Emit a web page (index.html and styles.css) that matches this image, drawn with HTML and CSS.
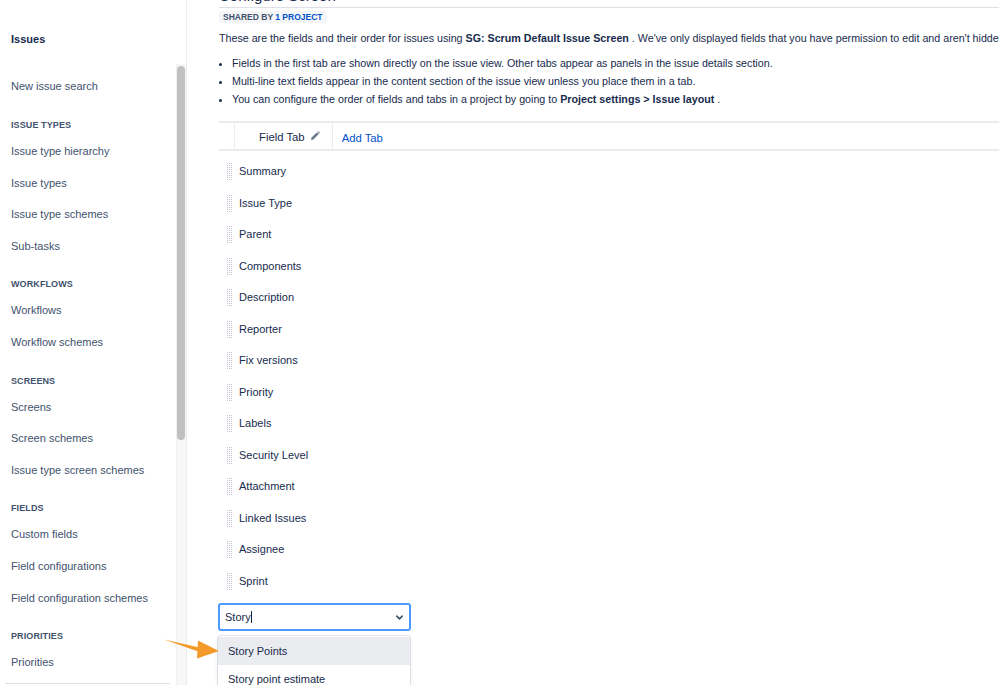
FILE: index.html
```html
<!DOCTYPE html>
<html lang="en">
<head>
  <meta charset="UTF-8">
  <title>Configure Screen</title>
  <link rel="stylesheet" href="styles.css">
</head>
<body>

<!-- left admin nav -->
<aside class="sidebar">
  <nav class="nav">
    <div class="nav-title">Issues</div>
    <a class="nav-item first">New issue search</a>

    <div class="nav-head">ISSUE TYPES</div>
    <a class="nav-item">Issue type hierarchy</a>
    <a class="nav-item">Issue types</a>
    <a class="nav-item">Issue type schemes</a>
    <a class="nav-item">Sub-tasks</a>

    <div class="nav-head">WORKFLOWS</div>
    <a class="nav-item">Workflows</a>
    <a class="nav-item">Workflow schemes</a>

    <div class="nav-head">SCREENS</div>
    <a class="nav-item">Screens</a>
    <a class="nav-item">Screen schemes</a>
    <a class="nav-item">Issue type screen schemes</a>

    <div class="nav-head">FIELDS</div>
    <a class="nav-item">Custom fields</a>
    <a class="nav-item">Field configurations</a>
    <a class="nav-item">Field configuration schemes</a>

    <div class="nav-head">PRIORITIES</div>
    <a class="nav-item">Priorities</a>
    <div class="nav-rule"></div>
  </nav>
  <div class="scroll-track"><div class="scroll-thumb"></div></div>
</aside>

<!-- screen config -->
<main class="content">
  <header class="page-head">
    <h1>Configure Screen</h1>
  </header>
  <span class="lozenge">SHARED BY <span class="blue">1 PROJECT</span></span>

  <p class="intro">These are the fields and their order for issues using <b>SG: Scrum Default Issue Screen</b> . We've only displayed fields that you have permission to edit and aren't hidden by your field configuration.</p>
  <ul class="notes">
    <li>Fields in the first tab are shown directly on the issue view. Other tabs appear as panels in the issue details section.</li>
    <li>Multi-line text fields appear in the content section of the issue view unless you place them in a tab.</li>
    <li>You can configure the order of fields and tabs in a project by going to <b>Project settings &gt; Issue layout</b> .</li>
  </ul>

  <div class="tabs">
    <div class="tab active">Field Tab
      <svg class="pencil" viewBox="0 0 10 10" width="10" height="10"><path d="M1 9l.6-2.4L7 1.2l1.8 1.8-5.4 5.4z" fill="#6b778c"/><path d="M7.6.6l.6-.6L10 1.8l-.6.6z" fill="#6b778c"/></svg>
    </div>
    <a class="tab-add">Add Tab</a>
  </div>

  <ul class="fields">
    <li><span class="grip"></span>Summary</li>
    <li><span class="grip"></span>Issue Type</li>
    <li><span class="grip"></span>Parent</li>
    <li><span class="grip"></span>Components</li>
    <li><span class="grip"></span>Description</li>
    <li><span class="grip"></span>Reporter</li>
    <li><span class="grip"></span>Fix versions</li>
    <li><span class="grip"></span>Priority</li>
    <li><span class="grip"></span>Labels</li>
    <li><span class="grip"></span>Security Level</li>
    <li><span class="grip"></span>Attachment</li>
    <li><span class="grip"></span>Linked Issues</li>
    <li><span class="grip"></span>Assignee</li>
    <li><span class="grip"></span>Sprint</li>
  </ul>

  <div class="picker">
    <div class="picker-input">
      <span>Story<span class="caret"></span></span>
      <svg viewBox="0 0 10 10" width="9" height="9"><path d="M2 3.5l3 3 3-3" fill="none" stroke="#42526e" stroke-width="1.8" stroke-linecap="round" stroke-linejoin="round"/></svg>
    </div>
    <ul class="picker-menu">
      <li class="hover">Story Points</li>
      <li>Story point estimate</li>
    </ul>
    <svg class="arrow" viewBox="0 0 56 24" width="56" height="24">
      <path d="M0 2.5 L40 11.5 L38.5 16 Z" fill="#f39a2b"/>
      <path d="M34 3.5 L55 14 L33 21.5 Z" fill="#f39a2b"/>
    </svg>
  </div>
</main>

</body>
</html>
```

FILE: styles.css
```css
html,body{height:100%}
body{margin:0;display:flex;overflow:hidden;background:#fff;color:#172b4d;font-family:"Liberation Sans",Arial,sans-serif;font-size:11px}
a{text-decoration:none}

/* sidebar */
.sidebar{width:186px;flex:none;display:flex;border-right:1px solid #ebecf0;position:relative}
.nav{flex:1;padding:33px 0 0 11px;display:flex;flex-direction:column;position:relative}
.nav-title{font-weight:bold;color:#172b4d;height:13px;margin-bottom:35px}
.nav-item{color:#42526e;height:13px;line-height:13px;margin-bottom:18.6px}
.nav-item.first{margin-bottom:19px}
.nav-head{font-size:9px;font-weight:bold;color:#42526e;height:12px;line-height:12px;margin:0 0 14px;letter-spacing:.1px}
.nav-item + .nav-head{margin-top:7px}
.nav-rule{position:absolute;left:5px;right:6px;top:683px;border-top:1px solid #dfe1e6}
.scroll-track{width:9px;margin-top:64px;background:#f7f7f7;border-left:1px solid #f0f0f0}
.scroll-thumb{width:8px;height:374px;margin:2px 0 0 0;background:#c1c1c1;border-radius:4px}

/* main */
.content{flex:1;padding-left:32px;min-width:0}
.page-head{margin-top:-14px;border-bottom:1px solid #dfe1e6;height:21px}
.page-head h1{margin:0;font-size:15px;font-weight:normal;color:#172b4d;line-height:20px}
.lozenge{display:inline-block;margin-top:3px;background:#f4f5f7;border-radius:3px;padding:0 4px;font-size:8.5px;font-weight:bold;color:#42526e;line-height:12px}
.lozenge .blue{color:#0052cc}
.intro{margin:9px 0 0;white-space:nowrap;font-size:10.7px;line-height:13px;color:#172b4d}
.notes{margin:9px 0 0;padding:0 0 0 13px;font-size:10.7px;line-height:18px;white-space:nowrap;color:#172b4d}

.tabs{margin-top:13px;display:flex;align-items:stretch;border-top:2px solid #ebecf0;border-bottom:2px solid #ebecf0;height:26px;padding-left:15px}
.tab{display:flex;align-items:center;padding:2px 12px 0 24px;border-left:1px solid #ebecf0;border-right:1px solid #ebecf0;color:#172b4d;font-size:11.3px}
.pencil{margin-left:5px;margin-top:-3px}
.tab-add{display:flex;align-items:center;padding:3px 0 0 9px;color:#0052cc;font-size:11.3px}

.fields{list-style:none;margin:11px 0 0;padding:0 0 0 7px}
.fields li{display:flex;align-items:center;height:18px;margin-bottom:13.5px;color:#172b4d;font-size:11px}
.grip{width:6px;height:18px;margin-right:7px;background-color:#c1c7d0;background-image:linear-gradient(90deg,#fff 1px,transparent 1px),linear-gradient(#fff 1px,transparent 1px);background-size:2px 2px}

.picker{position:relative;width:193px;margin-top:7px;margin-left:-1px}
.picker-input{height:24px;border:2px solid #4c9aff;border-radius:3px;display:flex;align-items:center;justify-content:space-between;padding:0 5px 0 5px;font-size:11px;color:#172b4d}
.caret{display:inline-block;width:1px;height:12px;background:#172b4d;vertical-align:-2px}
.picker-menu{list-style:none;margin:5px 0 0;padding:1px 0 0;width:192px;box-shadow:0 0 0 1px rgba(9,30,66,.1),0 2px 4px rgba(9,30,66,.12);border-radius:3px;background:#fff}
.picker-menu li{height:28px;line-height:28px;padding-left:10px;font-size:11px;color:#172b4d}
.picker-menu li.hover{background:#ebecf0}
.arrow{position:absolute;left:-54px;top:34px}
```
